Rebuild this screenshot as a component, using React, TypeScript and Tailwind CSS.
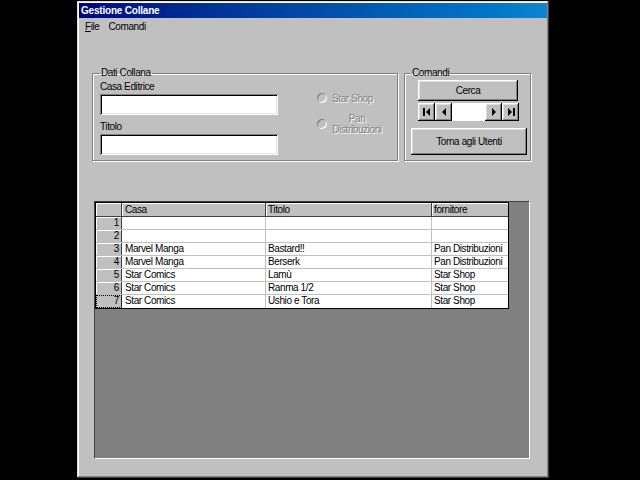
const raised =
  "bg-[#c0c0c0] shadow-[inset_-1px_-1px_0_#000,inset_1px_1px_0_#fff,inset_-2px_-2px_0_#808080,inset_2px_2px_0_#dfdfdf]";
const sunken =
  "bg-white shadow-[inset_1px_1px_0_#808080,inset_-1px_-1px_0_#fff,inset_2px_2px_0_#000,inset_-2px_-2px_0_#dfdfdf]";
const disabled = "text-[#808080] [text-shadow:1px_1px_0_#fff]";

const rows = [
  { n: 1, casa: "", titolo: "", forn: "" },
  { n: 2, casa: "", titolo: "", forn: "" },
  { n: 3, casa: "Marvel Manga", titolo: "Bastard!!", forn: "Pan Distribuzioni" },
  { n: 4, casa: "Marvel Manga", titolo: "Berserk", forn: "Pan Distribuzioni" },
  { n: 5, casa: "Star Comics", titolo: "Lamù", forn: "Star Shop" },
  { n: 6, casa: "Star Comics", titolo: "Ranma 1/2", forn: "Star Shop" },
  { n: 7, casa: "Star Comics", titolo: "Ushio e Tora", forn: "Star Shop" },
];

function Radio() {
  return (
    <span className="h-[10px] w-[10px] shrink-0 rounded-full bg-[#c0c0c0] shadow-[inset_1px_1px_0_#808080,inset_-1px_-1px_0_#fff]" />
  );
}

function NavButton({ dir, end }: { dir: "left" | "right"; end?: boolean }) {
  return (
    <button className={`flex h-full w-[17px] items-center justify-center ${raised}`}>
      <svg width="8" height="8" viewBox="0 0 8 8">
        {dir === "left" ? (
          <>
            {end && <rect x="0" y="0" width="2" height="8" fill="#000" />}
            <polygon points={end ? "7,0 3,4 7,8" : "6,0 2,4 6,8"} fill="#000" />
          </>
        ) : (
          <>
            <polygon points={end ? "1,0 5,4 1,8" : "2,0 6,4 2,8"} fill="#000" />
            {end && <rect x="6" y="0" width="2" height="8" fill="#000" />}
          </>
        )}
      </svg>
    </button>
  );
}

function DataGrid() {
  return (
    <div className="w-[414px] border border-black bg-white">
      <div className="flex h-[14px] border-b border-[#404040] bg-[#c0c0c0]">
        <div className="w-[26px] border-r border-[#404040] shadow-[inset_1px_1px_0_#fff]" />
        <div className="w-[144px] border-r border-[#404040] pl-[3px] leading-[13px] shadow-[inset_1px_1px_0_#fff]">Casa</div>
        <div className="w-[166px] border-r border-[#404040] pl-[2px] leading-[13px] shadow-[inset_1px_1px_0_#fff]">Titolo</div>
        <div className="flex-1 pl-[2px] leading-[13px] shadow-[inset_1px_1px_0_#fff]">fornitore</div>
      </div>
      {rows.map((r, i) => (
        <div key={r.n} className={`flex h-[13px] ${i < rows.length - 1 ? "border-b border-[#c0c0c0]" : "h-[12px]"}`}>
          <div
            className={`w-[26px] border-r border-[#404040] bg-[#c0c0c0] pr-[2px] text-right leading-[12px] ${
              r.n === 7 ? "outline outline-1 -outline-offset-1 outline-dotted outline-black" : "shadow-[inset_1px_1px_0_#fff]"
            }`}
          >
            {r.n}
          </div>
          <div className="w-[144px] border-r border-[#c0c0c0] pl-[3px] leading-[12px]">{r.casa}</div>
          <div className="w-[166px] border-r border-[#c0c0c0] pl-[2px] leading-[12px]">{r.titolo}</div>
          <div className="flex-1 pl-[2px] leading-[12px]">{r.forn}</div>
        </div>
      ))}
    </div>
  );
}

export default function App() {
  return (
    <div className="h-[480px] w-[640px] overflow-hidden bg-black pt-[1px] text-[10px] tracking-[-0.4px] text-black [font-family:'Liberation_Sans',Arial,sans-serif]">
      <div className="ml-[77px] h-[477px] w-[472px] bg-[#c0c0c0] p-[2px] shadow-[inset_-1px_-1px_0_#404040,inset_1px_1px_0_#dfdfdf,inset_-2px_-2px_0_#808080,inset_2px_2px_0_#fff]">
        <div className="flex h-[15px] items-center bg-linear-to-r from-[#000080] to-[#1084d0] pl-[2px] font-bold tracking-[-0.2px] text-white">
          Gestione Collane
        </div>
        <div className="flex h-[16px] items-center gap-[9px] pl-[6px]">
          <span>
            <span className="underline">F</span>ile
          </span>
          <span>Comandi</span>
        </div>

        <div className="px-[13px] pt-[33px]">
          <div className="flex gap-[6px]">
            <fieldset className="w-[306px] border border-[#808080] px-[7px] pb-[5px] shadow-[1px_1px_0_#fff,inset_1px_1px_0_#fff]">
              <legend className="px-[1px] leading-[12px]">Dati Collana</legend>
              <div className="flex">
                <div className="w-[178px]">
                  <div className="mt-[2px] leading-[12px]">Casa Editrice</div>
                  <div className={`mt-[1px] h-[21px] ${sunken}`} />
                  <div className="mt-[6px] leading-[12px]">Titolo</div>
                  <div className={`mt-[1px] h-[21px] ${sunken}`} />
                </div>
                <div className="ml-[39px] flex flex-col">
                  <div className="mt-[13px] flex h-[12px] items-center gap-[5px]">
                    <Radio />
                    <span className={disabled}>Star Shop</span>
                  </div>
                  <div className="mt-[9px] flex items-center gap-[5px]">
                    <Radio />
                    <span className={`w-[50px] text-center leading-[11px] ${disabled}`}>
                      Pan
                      <br />
                      Distribuzioni
                    </span>
                  </div>
                </div>
              </div>
            </fieldset>

            <fieldset className="w-[127px] border border-[#808080] pb-[5px] shadow-[1px_1px_0_#fff,inset_1px_1px_0_#fff]">
              <legend className="ml-[6px] px-[1px] leading-[12px]">Comandi</legend>
              <button className={`ml-[13px] mt-[1px] block h-[21px] w-[100px] ${raised}`}>Cerca</button>
              <div className="ml-[13px] mt-[2px] flex h-[18px] w-[101px]">
                <NavButton dir="left" end />
                <NavButton dir="left" />
                <div className="flex-1 bg-white" />
                <NavButton dir="right" />
                <NavButton dir="right" end />
              </div>
              <button className={`ml-[6px] mt-[7px] block h-[27px] w-[116px] ${raised}`}>Torna agli Utenti</button>
            </fieldset>
          </div>

          <div className="ml-[2px] mt-[40px] h-[258px] w-[436px] border border-b-white border-l-[#404040] border-r-white border-t-[#404040] bg-[#808080]">
            <DataGrid />
          </div>
        </div>
      </div>
    </div>
  );
}
